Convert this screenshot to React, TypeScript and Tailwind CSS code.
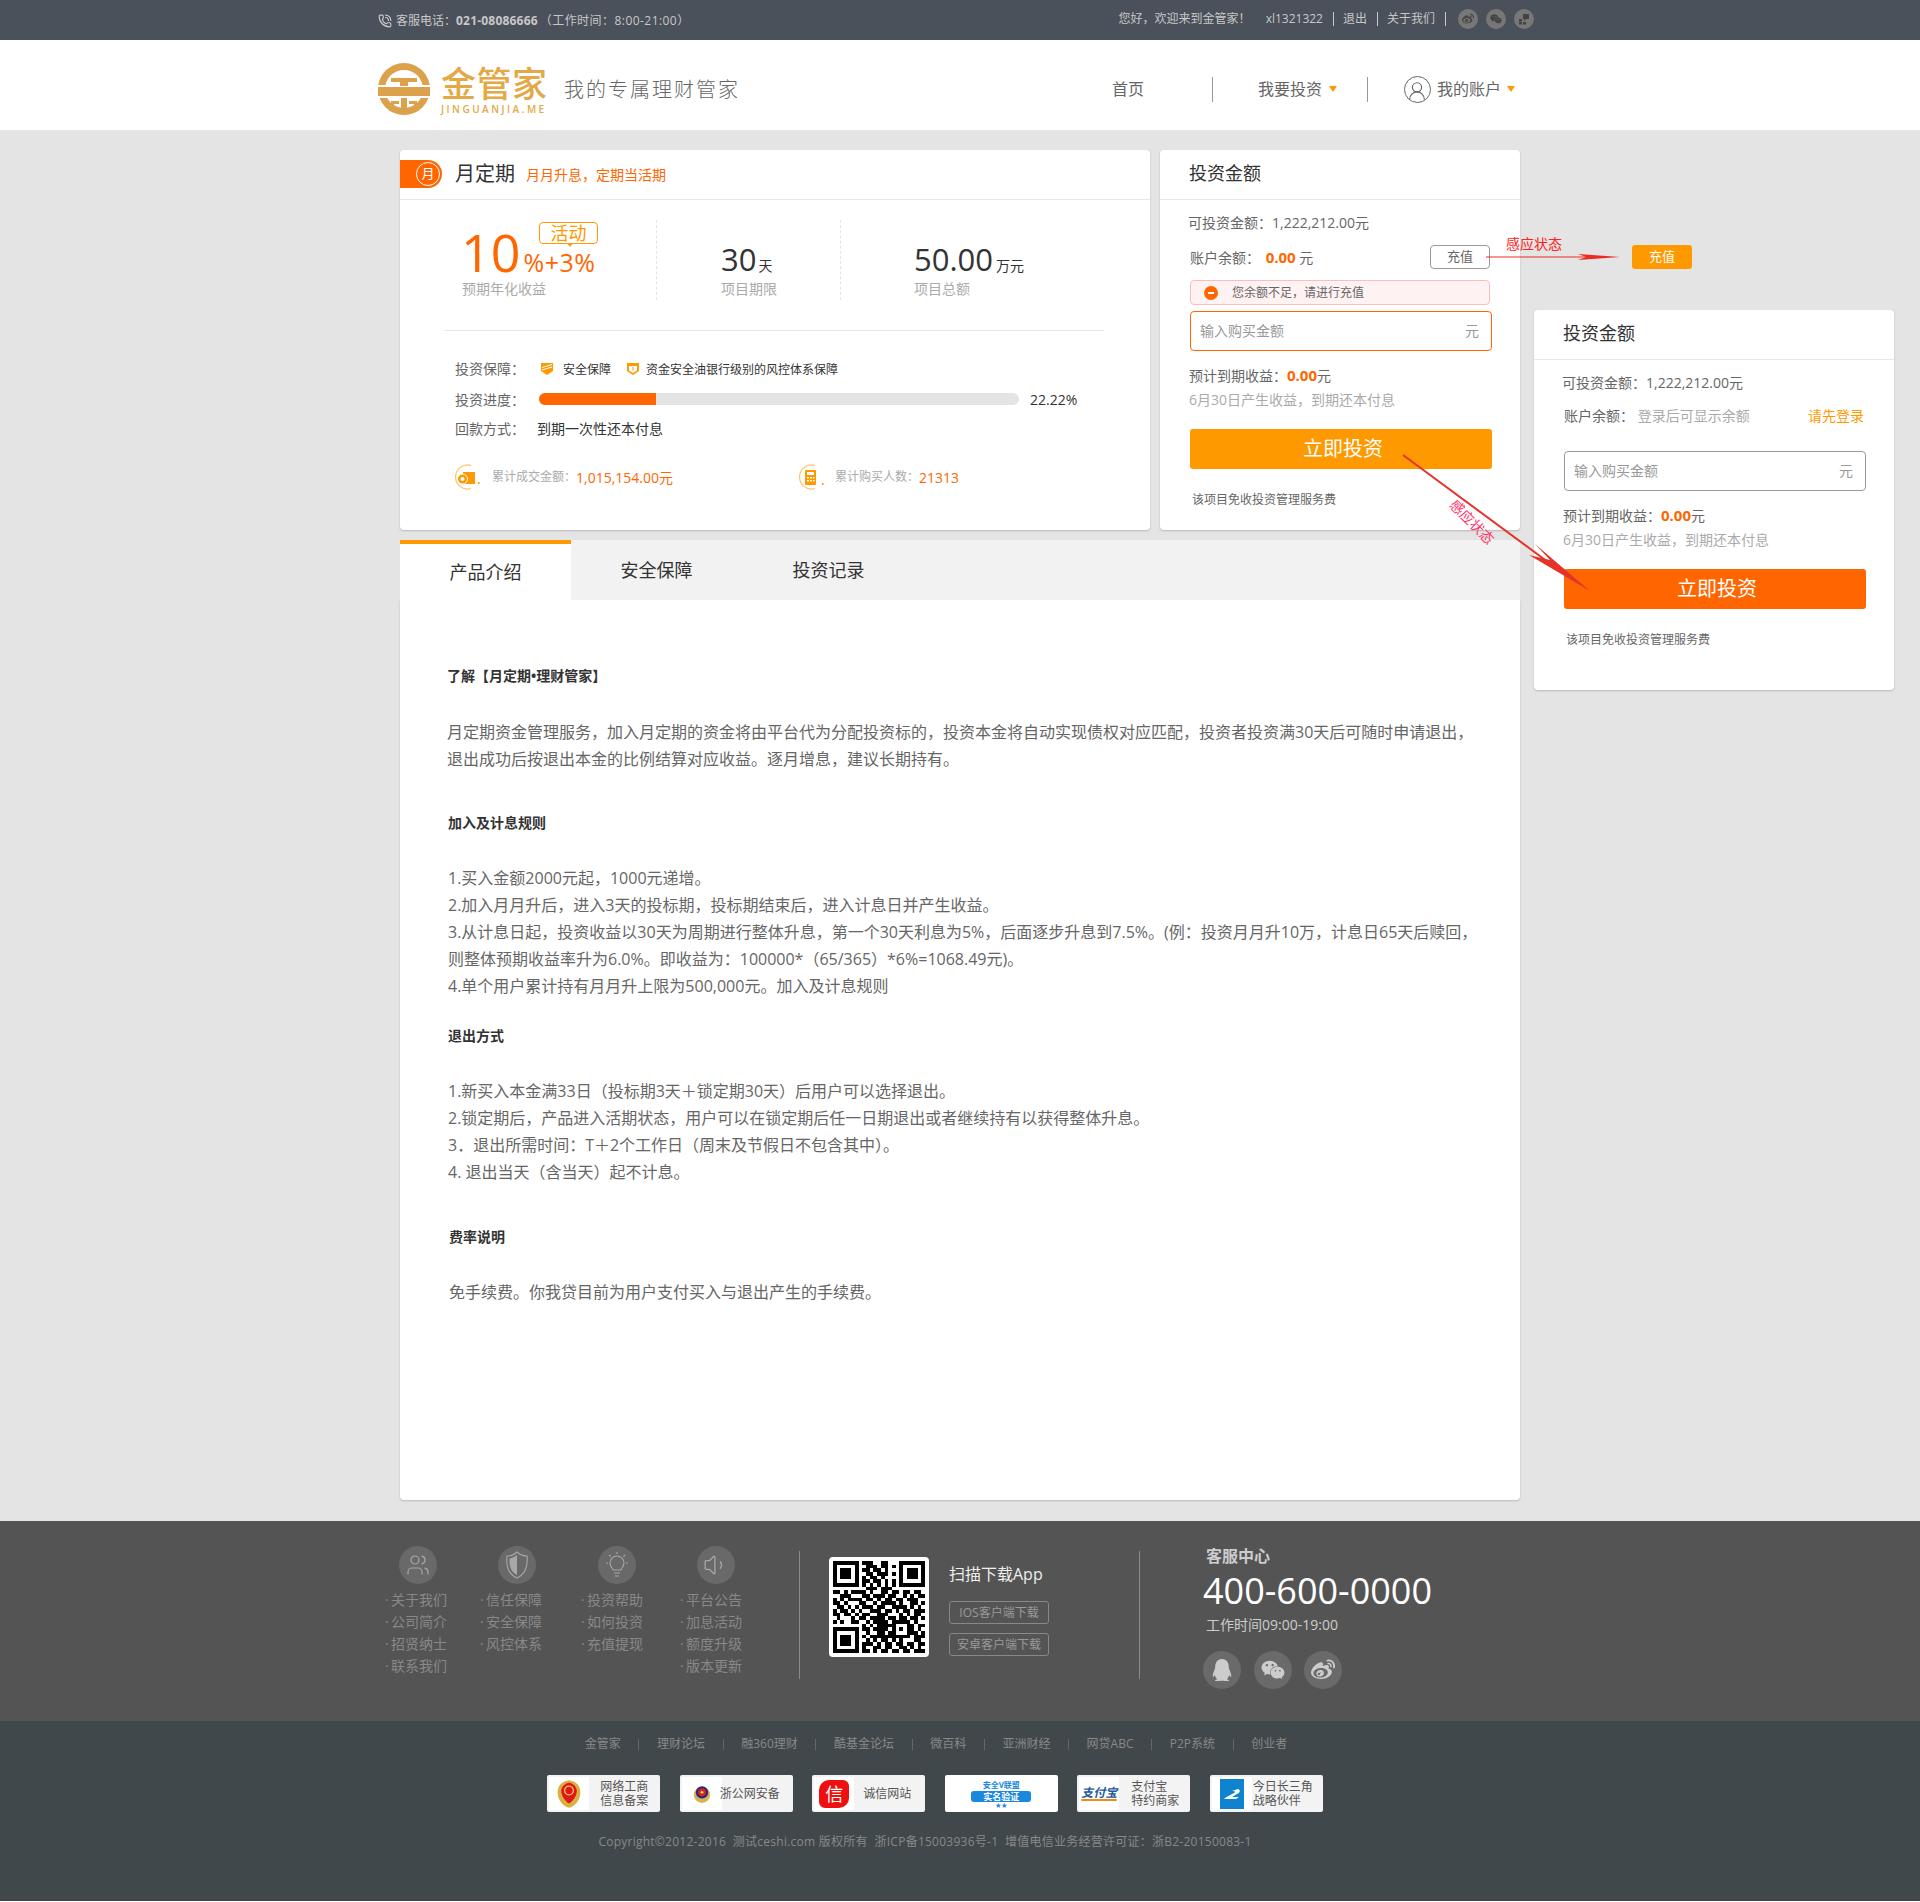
import { PhoneCall, Users, Volume1, UserRound } from 'lucide-react';
import { FaQq, FaWeibo, FaWeixin } from 'react-icons/fa';

const qrRows = [
  '1111111011100110001111111',
  '1000001001110110101000001',
  '1011101011011010001011101',
  '1011101001101110101011101',
  '1011101010110100001011101',
  '1000001011011010101000001',
  '1111111010101010101111111',
  '0000000001110111000000000',
  '1101011110100110110110110',
  '0011100011011101100101011',
  '1010111101101011011011100',
  '1101000110010111101001101',
  '0110101011101100111101010',
  '1011010100111011010110111',
  '1101101011001110001010110',
  '0100010110111101101101101',
  '1010011001011110111110100',
  '0000000010101111100011011',
  '1111111011011110101011010',
  '1000001001001101100011101',
  '1011101010111111111110111',
  '1011101001010110101000110',
  '1011101011101011011011011',
  '1000001010011011001101010',
  '1111111011010110110110111',
];

function QrCode() {
  return (
    <svg viewBox="0 0 25 25" className="h-[92px] w-[92px]" shapeRendering="crispEdges">
      {qrRows.map((row, y) =>
        row.split('').map((c, x) => (c === '1' ? <rect key={x + '-' + y} x={x} y={y} width="1" height="1" fill="#000" /> : null)),
      )}
    </svg>
  );
}

function LogoMark() {
  return (
    <svg viewBox="0 0 52 52" className="h-[52px] w-[52px] shrink-0">
      <circle cx="26" cy="26" r="26" fill="#dba24b" />
      <circle cx="26" cy="26" r="19" fill="#fff" />
      <rect x="0" y="22" width="52" height="2" fill="#fff" />
      <rect x="0" y="24" width="52" height="9" fill="#dba24b" />
      <rect x="0" y="33" width="52" height="2" fill="#fff" />
      <rect x="13" y="15" width="26" height="4" fill="#dba24b" />
      <rect x="22" y="19" width="8" height="4" fill="#dba24b" />
      <rect x="23" y="35" width="6" height="12" fill="#dba24b" />
      <path d="M13 38h8v3h-5v3h5v2h-8z" fill="#dba24b" />
      <path d="M39 38h-8v3h5v3h-5v2h8z" fill="#dba24b" />
    </svg>
  );
}

function Caret() {
  return <span className="block h-0 w-0 border-x-[4px] border-t-[6px] border-x-transparent border-t-[#ff9900]" />;
}

function InvestCard({ active }: { active: boolean }) {
  return (
    <div className="h-[380px] w-full rounded-[4px] bg-white shadow-[0_1px_2px_rgba(0,0,0,0.2)]">
      <div className="flex h-[50px] items-center border-b border-[#e8e8e8] pb-[2px] pl-[29px] text-[18px] text-[#333]">投资金额</div>
      <div className="px-[30px] pt-[13px] text-[14px] text-[#666]">
        <div className="-ml-[2px] h-5 leading-5">可投资金额：1,222,212.00元</div>
        {active ? (
          <>
            <div className="mt-3 flex h-6 items-center justify-between">
              <span>
                账户余额： <b className="ml-[2px] text-[15px] text-[#ff6600]">0.00</b> 元
              </span>
              <span className="flex h-6 w-[60px] items-center justify-center rounded-[4px] border border-[#999] text-[13px]">充值</span>
            </div>
            <div className="mt-[11px] flex h-[25px] w-[300px] items-center rounded-[4px] border border-[#ffbcbc] bg-[#fff2f2] pl-[13px] text-[12px]">
              <span className="flex h-[14px] w-[14px] items-center justify-center rounded-full bg-[#ff6600]">
                <span className="h-[2px] w-[6px] bg-white" />
              </span>
              <span className="ml-[14px]">您余额不足，请进行充值</span>
            </div>
          </>
        ) : (
          <div className="mt-[10px] flex h-6 items-center justify-between pr-[-1px]">
            <span>
              账户余额： <span className="text-[#aaa]">登录后可显示余额</span>
            </span>
            <span className="text-[#ff9900]">请先登录</span>
          </div>
        )}
        <div
          className={
            active
              ? 'mt-[6px] flex h-10 w-[302px] items-center justify-between rounded-[4px] border border-[#ff6600] px-[9px] text-[#999]'
              : 'mt-[24px] flex h-10 w-[302px] items-center justify-between rounded-[4px] border border-[#999] px-[9px] text-[#999]'
          }
        >
          <span className="-translate-y-px">输入购买金额</span>
          <span className="mr-[3px] -translate-y-px">元</span>
        </div>
        <div className="-ml-[1px] mt-[14px] h-5 leading-5">
          预计到期收益：<b className="text-[15px] text-[#ff6600]">0.00</b>元
        </div>
        <div className="-ml-[1px] mt-[5px] h-5 leading-5 text-[#aaa]">6月30日产生收益，到期还本付息</div>
        <div
          className={
            active
              ? 'mt-[19px] flex h-10 w-[302px] items-center justify-center rounded-[3px] bg-[#ff9900] pl-[4px] text-[20px] text-white'
              : 'mt-[19px] flex h-10 w-[302px] items-center justify-center rounded-[3px] bg-[#ff6600] pl-[4px] text-[20px] text-white'
          }
        >
          立即投资
        </div>
        <div className="ml-[2px] mt-[21px] h-5 text-[12px] leading-5">该项目免收投资管理服务费</div>
      </div>
    </div>
  );
}

function RingIcon({ kind }: { kind: 'coin' | 'calc' }) {
  return (
    <svg viewBox="0 0 26 26" className="h-[26px] w-[26px] shrink-0">
      <path d="M17 1.500A12 12 0 1 0 17 24.500" fill="none" stroke="#ffc266" strokeWidth="1.200" />
      {kind === 'coin' ? (
        <>
          <rect x="9" y="8" width="12" height="12" fill="#ff9900" />
          <circle cx="8.500" cy="15" r="5" fill="#ff9900" stroke="#fff" strokeWidth="1" />
          <circle cx="8.500" cy="15" r="2" fill="#fff" />
          <rect x="24" y="18" width="1.500" height="2" fill="#ff9900" />
        </>
      ) : (
        <>
          <rect x="7" y="6" width="11" height="15" rx="1" fill="#ff9900" />
          <rect x="9" y="8" width="7" height="3" fill="#fff" />
          <path d="M9 13h2v1.500H9zM12 13h2v1.500h-2zM15 13h1.500v1.500H15zM9 16h2v1.500H9zM12 16h2v1.500h-2zM15 16h1.500v1.500H15z" fill="#fff" />
          <rect x="24" y="19" width="1.500" height="2" fill="#ff9900" />
        </>
      )}
    </svg>
  );
}

function HalfShield() {
  return (
    <svg viewBox="0 0 24 28" className="h-[28px] w-[24px]" fill="none" stroke="currentColor" strokeWidth="1.100">
      <path d="M12 1c3 3 7 4 10 4 1 9-1 18-10 22C3 23 1 14 2 5c3 0 7-1 10-4z" />
      <path d="M12 4c-2 2-5 3-7.500 3.500C4 15 6 21 12 24z" fill="currentColor" stroke="none" />
    </svg>
  );
}

function BulbRays() {
  return (
    <svg viewBox="0 0 28 28" className="h-[28px] w-[28px]" fill="none" stroke="currentColor" strokeWidth="1.100">
      <path d="M10 19c0-2-3-3-3-7a7 7 0 0 1 14 0c0 4-3 5-3 7z" />
      <path d="M11 22h6M12 25h4" />
      <path d="M14 1v2M3 12h2M23 12h2M6 4l1.500 1.500M22 4l-1.500 1.500" />
    </svg>
  );
}

function FootCol({ w, iconLeft, textLeft, icon, links }: { w: string; iconLeft: string; textLeft?: string; icon: React.ReactNode; links: string[] }) {
  return (
    <div className={w}>
      <div className={iconLeft}>
        <div className="flex h-[38px] w-[38px] items-center justify-center rounded-full bg-[#696969] text-[#a8a8a8]">{icon}</div>
      </div>
      <div className={textLeft ? 'mt-[5px] ' + textLeft : 'mt-[5px]'}>
        {links.map((l) => (
          <div key={l} className="h-[22px] text-[14px] leading-[22px] text-[#888]">
            <span className="inline-block w-[6px]">·</span>
            {l}
          </div>
        ))}
      </div>
    </div>
  );
}

function Badge({ art, children, wide, pad }: { art: React.ReactNode; children?: React.ReactNode; wide?: boolean; pad?: string }) {
  if (wide) {
    return <div className="flex h-[37px] w-[113px] items-center justify-center rounded-[2px] bg-white">{art}</div>;
  }
  return (
    <div className="flex h-[37px] w-[113px] items-stretch rounded-[2px] bg-[#f3f3f3] text-[12px] leading-[14px] text-[#555]">
      <div className="my-[2px] ml-[2px] flex w-[40px] items-center justify-center bg-white">{art}</div>
      <div className={pad ? 'flex flex-1 flex-col justify-center ' + pad : 'flex flex-1 flex-col justify-center pl-[11px]'}>{children}</div>
    </div>
  );
}

const links = ['金管家', '理财论坛', '融360理财', '酷基金论坛', '微百科', '亚洲财经', '网贷ABC', 'P2P系统', '创业者'];

export default function App() {
  return (
    <div className="relative [font-family:'Open_Sans','Noto_Sans_CJK_SC',sans-serif]">
      <div className="flex h-10 items-center justify-between bg-[#4a515b] pl-[378px] pr-[386px] text-[12px] text-[#c8c8c8]">
        <div className="flex translate-y-px items-center">
          <PhoneCall size={14} strokeWidth={2} className="mr-1" />
          客服电话：<b className="tracking-[0.2px]">021-08086666</b>
          <span className="ml-[2px] tracking-[0.45px]">（工作时间：8:00-21:00）</span>
        </div>
        <div className="flex -translate-y-px items-center">
          <span>您好，欢迎来到金管家！</span>
          <span className="ml-[15px]">xl1321322</span>
          <span className="ml-[10px] mr-[9px] h-[14px] border-l border-[#c8c8c8]" />
          <span>退出</span>
          <span className="ml-[10px] mr-[9px] h-[14px] border-l border-[#c8c8c8]" />
          <span>关于我们</span>
          <span className="ml-[10px] mr-[12px] h-[14px] border-l border-[#c8c8c8]" />
          <span className="flex h-5 w-5 items-center justify-center rounded-full bg-[#777] text-[#444]">
            <FaWeibo size={12} />
          </span>
          <span className="ml-2 flex h-5 w-5 items-center justify-center rounded-full bg-[#777] text-[#444]">
            <FaWeixin size={12} />
          </span>
          <span className="ml-2 flex h-5 w-5 items-center justify-center rounded-full bg-[#777] text-[#444]">
            <svg viewBox="0 0 12 12" className="h-3 w-3" fill="currentColor">
              <path d="M5 1h6v5H8L6 8V6H5z" />
              <rect x="1" y="6" width="3" height="2.500" />
              <rect x="1" y="9" width="3" height="2.500" />
              <rect x="5" y="9" width="3" height="2.500" />
            </svg>
          </span>
        </div>
      </div>

      <div className="flex h-[90px] items-center justify-between bg-white pl-[378px] pr-[405px] pt-[8px]">
        <div className="flex items-center">
          <LogoMark />
          <div className="ml-[11px] w-[112px]">
            <div className="h-[38px] text-[35px] font-medium leading-[38px] tracking-[0.5px] text-[#e3a945]">金管家</div>
            <div className="mt-[1px] text-[10px] font-semibold leading-[10px] tracking-[2.5px] text-[#e3a945]">JINGUANJIA.ME</div>
          </div>
          <div className="ml-[11px] mt-[2px] text-[20px] font-light tracking-[2px] text-[#666]">我的专属理财管家</div>
        </div>
        <div className="flex items-center text-[16px] text-[#666]">
          <span>首页</span>
          <span className="ml-[68px] h-[25px] border-l border-[#999]" />
          <span className="ml-[45px]">我要投资</span>
          <span className="ml-[7px]">
            <Caret />
          </span>
          <span className="ml-[30px] h-[25px] border-l border-[#999]" />
          <span className="ml-[36px] flex h-[27px] w-[27px] items-center justify-center overflow-hidden rounded-full border border-[#666]">
            <UserRound size={22} strokeWidth={1.3} className="mt-1" />
          </span>
          <span className="ml-[6px]">我的账户</span>
          <span className="ml-[6px]">
            <Caret />
          </span>
        </div>
      </div>

      <div className="bg-[#e4e4e4] pb-[21px] pl-[400px] pt-5">
        <div className="flex items-start">
          <div className="w-[1120px]">
            <div className="flex gap-[10px]">
              <div className="h-[380px] w-[750px] rounded-[4px] bg-white shadow-[0_1px_2px_rgba(0,0,0,0.2)]">
                <div className="flex h-[50px] items-center border-b border-[#e8e8e8] pb-[1px]">
                  <span className="flex h-7 w-[42px] items-center justify-end rounded-r-[14px] bg-[#ff6600] pr-[2px]">
                    <span className="flex h-6 w-6 items-center justify-center rounded-full border border-white text-[13px] text-white">月</span>
                  </span>
                  <span className="ml-[13px] text-[20px] text-[#333]">月定期</span>
                  <span className="ml-[11px] text-[14px] text-[#ff6600]">月月升息，定期当活期</span>
                </div>
                <div className="mt-5 flex h-[80px]">
                  <div className="relative w-[257px] border-r border-dashed border-[#e4e4e4] pl-[62px]">
                    <div className="flex h-[60px] items-baseline pt-[4px] text-[#ff6600]">
                      <span className="-ml-px text-[52px] leading-[56px]">10</span>
                      <span className="ml-[3px] text-[25px] leading-none tracking-[0.5px]">%+3%</span>
                    </div>
                    <div className="-mt-px h-5 text-[14px] leading-5 text-[#aaa]">预期年化收益</div>
                    <div className="absolute left-[139px] top-[2px] flex h-[22px] w-[59px] items-center justify-center rounded-[4px] border border-[#ff9900] bg-white text-[18px] text-[#ff9900]">
                      活动
                      <span className="absolute -bottom-[4px] left-[27px] h-0 w-0 border-x-[3px] border-t-[4px] border-x-transparent border-t-[#ff9900]" />
                    </div>
                  </div>
                  <div className="w-[184px] border-r border-dashed border-[#e4e4e4] pl-[64px]">
                    <div className="flex h-[60px] items-baseline pt-[19px] text-[#333]">
                      <span className="text-[31px] leading-[40px]">30</span>
                      <span className="ml-[2px] text-[14px]">天</span>
                    </div>
                    <div className="-mt-px h-5 text-[14px] leading-5 text-[#aaa]">项目期限</div>
                  </div>
                  <div className="pl-[73px]">
                    <div className="flex h-[60px] items-baseline pt-[19px] text-[#333]">
                      <span className="text-[31px] leading-[40px]">50.00</span>
                      <span className="ml-[3px] text-[14px]">万元</span>
                    </div>
                    <div className="-mt-px h-5 text-[14px] leading-5 text-[#aaa]">项目总额</div>
                  </div>
                </div>
                <div className="mx-[44px] mt-[30px] h-px w-[660px] bg-[#e8e8e8]" />
                <div className="ml-[55px] mt-[23px] text-[14px] text-[#666]">
                  <div className="flex h-[30px] items-center">
                    <span className="w-[84px] -translate-y-px">投资保障：</span>
                    <svg viewBox="0 0 14 14" className="ml-[1px] h-[14px] w-[14px]">
                      <path d="M1 1h12v8l-6 4-6-4z" fill="#ff9900" />
                      <path d="M2 8l10-3M2 5.500l10-3" stroke="#fff" strokeWidth="1" />
                    </svg>
                    <span className="ml-[9px] translate-y-px text-[12px] text-[#333]">安全保障</span>
                    <svg viewBox="0 0 14 14" className="ml-[15px] h-[14px] w-[14px]">
                      <path d="M1 1h12v8l-6 4-6-4z" fill="#ff9900" />
                      <path d="M3 4h8v4.500l-4 2.500-4-2.500z" fill="#fff" />
                      <rect x="6.500" y="5" width="1" height="3.500" fill="#ff9900" />
                    </svg>
                    <span className="ml-[6px] translate-y-px text-[12px] text-[#333]">资金安全油银行级别的风控体系保障</span>
                  </div>
                  <div className="flex h-[30px] items-center">
                    <span className="w-[84px]">投资进度：</span>
                    <div className="h-3 w-[480px] overflow-hidden rounded-full bg-[#e4e4e4]">
                      <div className="h-full w-[117px] bg-[#ff6600]" />
                    </div>
                    <span className="ml-[11px] text-[#333]">22.22%</span>
                  </div>
                  <div className="flex h-[30px] -translate-y-px items-center">
                    <span className="w-[82px]">回款方式：</span>
                    <span className="text-[#333]">到期一次性还本付息</span>
                  </div>
                </div>
                <div className="ml-[54px] mt-[20px] flex text-[12px] text-[#aaa]">
                  <div className="flex w-[344px] items-center">
                    <RingIcon kind="coin" />
                    <span className="ml-3">累计成交金额：</span>
                    <span className="text-[14px] text-[#ff6600]">1,015,154.00元</span>
                  </div>
                  <div className="flex items-center">
                    <RingIcon kind="calc" />
                    <span className="ml-[11px]">累计购买人数：</span>
                    <span className="text-[14px] text-[#ff6600]">21313</span>
                  </div>
                </div>
              </div>
              <div className="w-[360px]">
                <InvestCard active />
              </div>
            </div>

            <div className="mt-[10px] flex h-[60px] bg-[#f2f2f2] pt-[1px] text-[18px] text-[#333]">
              <div className="-mt-[1px] flex w-[171px] items-center justify-center border-t-4 border-[#ff9900] bg-white">产品介绍</div>
              <div className="flex w-[171px] items-center justify-center">安全保障</div>
              <div className="ml-px flex w-[171px] items-center justify-center">投资记录</div>
            </div>
            <div className="h-[900px] rounded-b-[4px] bg-white pl-[47px] pt-[62px] text-[16px] leading-[27px] text-[#666] shadow-[0_1px_2px_rgba(0,0,0,0.2)]">
              <div className="text-[14px] font-bold text-[#333]">了解【月定期•理财管家】</div>
              <div className="mt-[30px]">
                月定期资金管理服务，加入月定期的资金将由平台代为分配投资标的，投资本金将自动实现债权对应匹配，投资者投资满30天后可随时申请退出，
                <br />
                退出成功后按退出本金的比例结算对应收益。逐月增息，建议长期持有。
              </div>
              <div className="ml-px mt-[36px] text-[14px] font-bold text-[#333]">加入及计息规则</div>
              <div className="ml-px mt-[29px]">
                1.买入金额2000元起，1000元递增。
                <br />
                2.加入月月升后，进入3天的投标期，投标期结束后，进入计息日并产生收益。
                <br />
                3.从计息日起，投资收益以30天为周期进行整体升息，第一个30天利息为5%，后面逐步升息到7.5%。(例：投资月月升10万，计息日65天后赎回，
                <br />
                则整体预期收益率升为6.0%。即收益为：100000*（65/365）*6%=1068.49元)。
                <br />
                4.单个用户累计持有月月升上限为500,000元。加入及计息规则
              </div>
              <div className="ml-px mt-[22px] text-[14px] font-bold text-[#333]">退出方式</div>
              <div className="ml-px mt-[29px]">
                1.新买入本金满33日（投标期3天＋锁定期30天）后用户可以选择退出。
                <br />
                2.锁定期后，产品进入活期状态，用户可以在锁定期后任一日期退出或者继续持有以获得整体升息。
                <br />
                3．退出所需时间：T＋2个工作日（周末及节假日不包含其中）。
                <br />
                4. 退出当天（含当天）起不计息。
              </div>
              <div className="ml-[2px] mt-[37px] text-[14px] font-bold text-[#333]">费率说明</div>
              <div className="ml-[2px] mt-[29px]">免手续费。你我贷目前为用户支付买入与退出产生的手续费。</div>
            </div>
          </div>
          <div className="ml-[14px] mt-[160px] w-[360px]">
            <InvestCard active={false} />
          </div>
        </div>
      </div>

      <div className="flex h-[200px] bg-[#545454] pl-[385px] pt-[25px]">
        <div className="flex w-[414px]">
          <FootCol w="w-[95px]" iconLeft="pl-[14px]" icon={<Users size={24} strokeWidth={1.2} />} links={['关于我们', '公司简介', '招贤纳士', '联系我们']} />
          <FootCol w="w-[100px]" iconLeft="pl-[18px]" icon={<HalfShield />} links={['信任保障', '安全保障', '风控体系']} />
          <FootCol w="w-[99px]" iconLeft="pl-[18px]" textLeft="pl-px" icon={<BulbRays />} links={['投资帮助', '如何投资', '充值提现']} />
          <FootCol w="w-[120px]" iconLeft="pl-[18px]" textLeft="pl-px" icon={<Volume1 size={26} strokeWidth={1.2} />} links={['平台公告', '加息活动', '额度升级', '版本更新']} />
        </div>
        <div className="mt-[5px] flex h-[128px] w-[341px] border-r border-l border-[#8a8a8a] pl-[29px] pt-[6px]">
          <div className="flex h-[100px] w-[100px] items-center justify-center rounded-[4px] bg-white">
            <QrCode />
          </div>
          <div className="ml-[20px]">
            <div className="mt-[5px] h-6 text-[16px] leading-6 text-[#eee]">扫描下载App</div>
            <div className="mt-[15px] flex h-[23px] w-[100px] items-center justify-center rounded-[3px] border border-[#888] text-[12px] text-[#999]">IOS客户端下载</div>
            <div className="mt-[9px] flex h-[23px] w-[100px] items-center justify-center rounded-[3px] border border-[#888] text-[12px] text-[#999]">安卓客户端下载</div>
          </div>
        </div>
        <div className="ml-[63px]">
          <div className="-mt-[2px] ml-[3px] h-6 text-[16px] font-bold leading-6 text-[#ccc]">客服中心</div>
          <div className="mt-[3px] h-10 text-[36px] leading-10 text-white">400-600-0000</div>
          <div className="ml-[3px] mt-1 h-5 text-[14px] leading-5 text-[#ccc]">工作时间09:00-19:00</div>
          <div className="mt-[16px] flex gap-[12.5px] text-[#ccc]">
            <span className="flex h-[38px] w-[38px] items-center justify-center rounded-full bg-[#6a6a6a]">
              <FaQq size={22} />
            </span>
            <span className="flex h-[38px] w-[38px] items-center justify-center rounded-full bg-[#6a6a6a]">
              <FaWeixin size={24} />
            </span>
            <span className="flex h-[38px] w-[38px] items-center justify-center rounded-full bg-[#6a6a6a]">
              <FaWeibo size={24} />
            </span>
          </div>
        </div>
      </div>

      <div className="h-[180px] bg-[#40484b] pt-[13px]">
        <div className="flex h-5 items-center justify-center pr-[48px] text-[12px] text-[#888]">
          {links.map((l, i) => (
            <span key={l} className="flex items-center">
              {i > 0 && <span className="mx-[17.6px] h-[11px] border-l border-[#666]" />}
              {l}
            </span>
          ))}
        </div>
        <div className="mt-[21px] flex justify-center gap-[19.5px] pr-[50px]">
          <Badge
            art={
              <svg viewBox="0 0 30 34" className="h-[30px] w-[26px]">
                <path d="M15 1c6 1 12 4 13 12 1 9-5 18-13 20C7 31 1 22 2 13 3 5 9 2 15 1z" fill="#d9b13f" />
                <path d="M15 4c4 1 8 3 9 9 0 6-4 12-9 15-5-3-9-9-9-15 1-6 5-8 9-9z" fill="#e1151c" />
                <circle cx="15" cy="13" r="5" fill="none" stroke="#f2d34a" strokeWidth="1.500" />
              </svg>
            }
          >
            <span>网络工商</span>
            <span>信息备案</span>
          </Badge>
          <Badge
            pad="-ml-[2px]"
            art={
              <svg viewBox="0 0 22 26" className="h-[22px] w-[18px]">
                <circle cx="11" cy="14" r="10" fill="#d9b254" />
                <circle cx="11" cy="11" r="7.500" fill="#1b2a8a" />
                <circle cx="11" cy="11" r="5" fill="#d8201c" />
                <circle cx="11" cy="11" r="1.800" fill="#f2d34a" />
              </svg>
            }
          >
            <span className="whitespace-nowrap">浙公网安备</span>
          </Badge>
          <Badge
            pad="pl-[9px]"
            art={
              <span className="flex h-[28px] w-[30px] items-center justify-center rounded-[10px_6px_10px_6px] bg-[#ee1010] text-[18px] leading-none text-white">信</span>
            }
          >
            <span>诚信网站</span>
          </Badge>
          <Badge
            wide
            art={
              <div className="relative flex h-[28px] w-[68px] flex-col items-center text-[#1a88dd]">
                <span className="h-[9px] text-[8px] font-bold leading-[9px] whitespace-nowrap">安全V联盟</span>
                <span className="mt-[2px] flex h-[13px] w-[60px] items-center justify-center rounded-[3px] bg-[#1a88dd] text-[9px] font-bold leading-none text-white">实名验证</span>
                <span className="text-[6px] leading-[6px]">★★</span>
              </div>
            }
          />
          <Badge
            pad="pl-[12px]"
            art={
              <div className="relative flex w-[36px] flex-col items-center">
                <span className="text-[12px] font-bold italic leading-[12px] whitespace-nowrap text-[#1d5a9a]">支付宝</span>
                <span className="h-[2px] w-[36px] rounded-full bg-[#f08a1d]" />
              </div>
            }
          >
            <span>支付宝</span>
            <span>特约商家</span>
          </Badge>
          <Badge
            pad="pl-[1px]"
            art={
              <svg viewBox="0 0 24 30" className="h-[30px] w-[24px]">
                <rect width="24" height="30" fill="#0e84d0" />
                <path d="M4 20c3-3 7-4 10-6 2-1 1-2-2-2l6-2c3 1 2 4-1 5l-5 3h7l-3 2H4z" fill="#fff" />
              </svg>
            }
          >
            <span className="whitespace-nowrap">今日长三角</span>
            <span className="whitespace-nowrap">战略伙伴</span>
          </Badge>
        </div>
        <div className="mt-5 h-5 whitespace-pre pr-[70px] text-center text-[12px] leading-5 tracking-[0.25px] text-[#888]">
          {'Copyright©2012-2016  测试ceshi.com 版权所有  浙ICP备15003936号-1  增值电信业务经营许可证：浙B2-20150083-1'}
        </div>
      </div>

      {/* 标注层：感应状态 */}
      <span className="absolute left-[1506px] top-[234px] text-[14px] leading-5 text-[#ff2020]">感应状态</span>
      <span className="absolute left-[1632px] top-[245px] flex h-6 w-[60px] items-center justify-center rounded-[3px] bg-[#ff9900] text-[13px] text-white">充值</span>
      <span className="absolute left-[1444px] top-[512px] rotate-45 text-[14px] leading-5 text-[#ff3366]">感应状态</span>
      <svg className="pointer-events-none absolute left-0 top-0 h-[800px] w-[1920px]" viewBox="0 0 1920 800">
        <path d="M1486 257H1590" stroke="#ee2a24" strokeWidth="1" />
        <path d="M1578 254L1620 257L1578 260L1586 257z" fill="#ee2a24" />
        <path d="M1403 455L1552 565" stroke="#e5332a" strokeWidth="2" fill="none" />
        <path d="M1535 544L1590 591L1529 555L1550 560z" fill="#e5332a" />
      </svg>
    </div>
  );
}
